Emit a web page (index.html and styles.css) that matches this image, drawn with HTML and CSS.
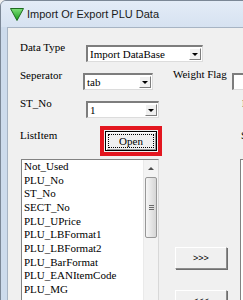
FILE: index.html
```html
<!DOCTYPE html>
<html lang="en">
<head>
  <meta charset="UTF-8" />
  <title>Import Or Export PLU Data</title>
  <link rel="stylesheet" href="styles.css">
</head>
<body>
  <div class="window">
    <!-- Title bar -->
    <div class="titlebar">
      <svg class="app-icon" width="14" height="13" viewBox="0 0 14 13">
        <defs>
          <linearGradient id="g" x1="0" y1="0" x2="0" y2="1">
            <stop offset="0" stop-color="#7ee07a" />
            <stop offset="1" stop-color="#159a19" />
          </linearGradient>
        </defs>
        <polygon points="0.5,0.5 13.5,0.5 7,12.5" fill="url(#g)" stroke="#1d6b1f" stroke-width="1" />
      </svg>
      <span class="title">Import Or Export PLU Data</span>
    </div>

    <div class="frame">
      <div class="client">
        <div class="row row-first">
          <span class="label">Data Type</span>
          <div class="combo combo-wide">
            <span class="combo-text">Import DataBase</span>
            <span class="combo-btn"><i class="arrow"></i></span>
          </div>
        </div>

        <div class="row">
          <span class="label">Seperator</span>
          <div class="combo combo-short">
            <span class="combo-text">tab</span>
            <span class="combo-btn"><i class="arrow"></i></span>
          </div>
          <span class="side-label">Weight Flag</span>
          <div class="combo combo-edge"></div>
        </div>

        <div class="row">
          <span class="label">ST_No</span>
          <div class="combo combo-short">
            <span class="combo-text">1</span>
            <span class="combo-btn"><i class="arrow"></i></span>
          </div>
          <span class="far-label">N</span>
        </div>

        <div class="row row-open">
          <span class="label label-open">ListItem</span>
          <div class="mark">
            <button class="btn btn-default"><span class="focus">Open</span></button>
          </div>
          <span class="far-label far-label-open">S</span>
        </div>

        <!-- Lists and move buttons -->
        <div class="lists">
          <div class="listbox">
            <ul class="items">
              <li>Not_Used</li>
              <li>PLU_No</li>
              <li>ST_No</li>
              <li>SECT_No</li>
              <li>PLU_UPrice</li>
              <li>PLU_LBFormat1</li>
              <li>PLU_LBFormat2</li>
              <li>PLU_BarFormat</li>
              <li>PLU_EANItemCode</li>
              <li>PLU_MG</li>
            </ul>
            <div class="scrollbar">
              <div class="sb-up"><i class="up-arrow"></i></div>
              <div class="sb-thumb">
                <span class="grip"></span>
              </div>
            </div>
          </div>

          <div class="moves">
            <button class="btn btn-move btn-add">&gt;&gt;&gt;</button>
            <button class="btn btn-move btn-remove">&lt;&lt;&lt;</button>
          </div>

          <div class="listbox-right"></div>
        </div>
      </div>
    </div>
  </div>
</body>
</html>
```

FILE: styles.css
```css
body {
  margin: 0;
  width: 243px;
  height: 300px;
  overflow: hidden;
  background: #f0f0f0;
  font-family: 'Liberation Serif', 'Times New Roman', serif;
  font-size: 11px;
  color: #000;
}
.window {
  width: 262px;
  height: 320px;
  border: 1px solid #7b8796;
  border-radius: 6px 6px 0 0;
  background: #cfdcec;
  box-sizing: border-box;
}
.titlebar {
  height: 26px;
  display: flex;
  align-items: center;
  padding-left: 9px;
  background: linear-gradient(#e3ecf7, #d6e2f1);
  border-radius: 5px 5px 0 0;
}
.app-icon {
  margin-top: 1px;
}
.title {
  margin-left: 3px;
  font-family: 'Liberation Sans', Arial, sans-serif;
  font-size: 11px;
  color: #1a1a1a;
}
.frame {
  padding-left: 6px;
  height: 100%;
  background: #cddbec;
}
.client {
  height: 100%;
  background: #f0f0f0;
  border-top: 1px solid #a7b4c4;
  border-left: 1px solid #a7b4c4;
  padding-left: 12px;
  box-sizing: border-box;
}
.row {
  display: flex;
  align-items: flex-start;
  height: 17px;
  margin-top: 11px;
}
.row-first {
  margin-top: 17px;
}
.label {
  width: 66px;
  margin-top: -4px;
  line-height: 13px;
}
.side-label {
  margin-left: 20px;
  margin-top: -5px;
  line-height: 13px;
  width: 62px;
}
.far-label {
  margin-left: 83px;
  margin-top: -4px;
  line-height: 13px;
}
.combo {
  display: flex;
  height: 17px;
  box-sizing: border-box;
  background: #fff;
  border-style: solid;
  border-width: 2px 1px 1px 2px;
  border-color: #7d7d7d #dcdcdc #dcdcdc #7d7d7d;
}
.combo-wide {
  width: 117px;
}
.combo-short {
  width: 73px;
}
.combo-edge {
  width: 30px;
}
.combo-text {
  flex: 1;
  padding-left: 2px;
  line-height: 14px;
}
.combo-btn {
  width: 12px;
  margin: 1px 1px 1px 0;
  box-sizing: border-box;
  background: #f0f0f0;
  border: 1px solid;
  border-color: #fff #7d7d7d #7d7d7d #fff;
  display: flex;
  align-items: center;
  justify-content: center;
}
.arrow {
  border-left: 3px solid transparent;
  border-right: 3px solid transparent;
  border-top: 3px solid #000;
}
.row-open {
  height: 30px;
  margin-top: 8px;
}
.label-open {
  margin-top: 3px;
}
.far-label-open {
  margin-left: 79px;
  margin-top: 3px;
}
.mark {
  margin-left: 14px;
  width: 62px;
  height: 30px;
  box-sizing: border-box;
  border: 4px solid #e3161f;
  padding: 1px;
}
.btn {
  font-family: 'Liberation Serif', 'Times New Roman', serif;
  font-size: 11px;
  background: #f0f0f0;
  border: 1px solid;
  border-color: #fff #8c8c8c #8c8c8c #fff;
  padding: 0;
  color: #000;
}
.btn-default {
  width: 52px;
  height: 20px;
  border-color: #000;
  box-shadow: inset 1px 1px 0 #fff, inset -1px -1px 0 #9a9a9a;
  display: flex;
  padding: 2px;
  box-sizing: border-box;
}
.focus {
  flex: 1;
  border: 1px dotted #000;
  line-height: 12px;
  text-align: center;
}
.lists {
  display: flex;
  align-items: flex-start;
  margin-top: 3px;
  margin-left: 1px;
}
.listbox {
  width: 138px;
  height: 160px;
  box-sizing: border-box;
  background: #fff;
  border: 1px solid;
  border-color: #828282 #d8d8d8 #d8d8d8 #828282;
  display: flex;
}
.items {
  flex: 1;
  list-style: none;
  margin: 0;
  padding: 0 0 0 2px;
  line-height: 13.67px;
  white-space: nowrap;
  overflow: hidden;
}
.scrollbar {
  width: 14px;
  background: #f3f3f3;
  border-left: 1px solid #eaeaea;
}
.sb-up {
  height: 16px;
  display: flex;
  align-items: center;
  justify-content: center;
}
.up-arrow {
  border-left: 3px solid transparent;
  border-right: 3px solid transparent;
  border-bottom: 3px solid #4d4d4d;
}
.sb-thumb {
  height: 61px;
  margin: 1px 1px 0 1px;
  box-sizing: border-box;
  border: 1px solid #979797;
  border-radius: 2px;
  background: linear-gradient(to right, #f6f6f6, #e2e2e2 60%, #d6d6d6);
  display: flex;
  align-items: center;
  justify-content: center;
}
.grip {
  width: 5px;
  height: 5px;
  background: repeating-linear-gradient(#6b6b6b 0 1px, transparent 1px 2px);
}
.moves {
  display: flex;
  flex-direction: column;
  margin-left: 16px;
}
.btn-move {
  width: 52px;
  height: 22px;
  font-family: 'Liberation Sans', Arial, sans-serif;
  font-size: 9px;
  box-shadow: 1px 1px 0 #6e6e6e;
}
.btn-add {
  margin-top: 88px;
}
.btn-remove {
  margin-top: 21px;
}
.listbox-right {
  margin-left: 13px;
  width: 20px;
  height: 160px;
  background: #fff;
  border-left: 1px solid #828282;
  border-top: 1px solid #828282;
}
```
